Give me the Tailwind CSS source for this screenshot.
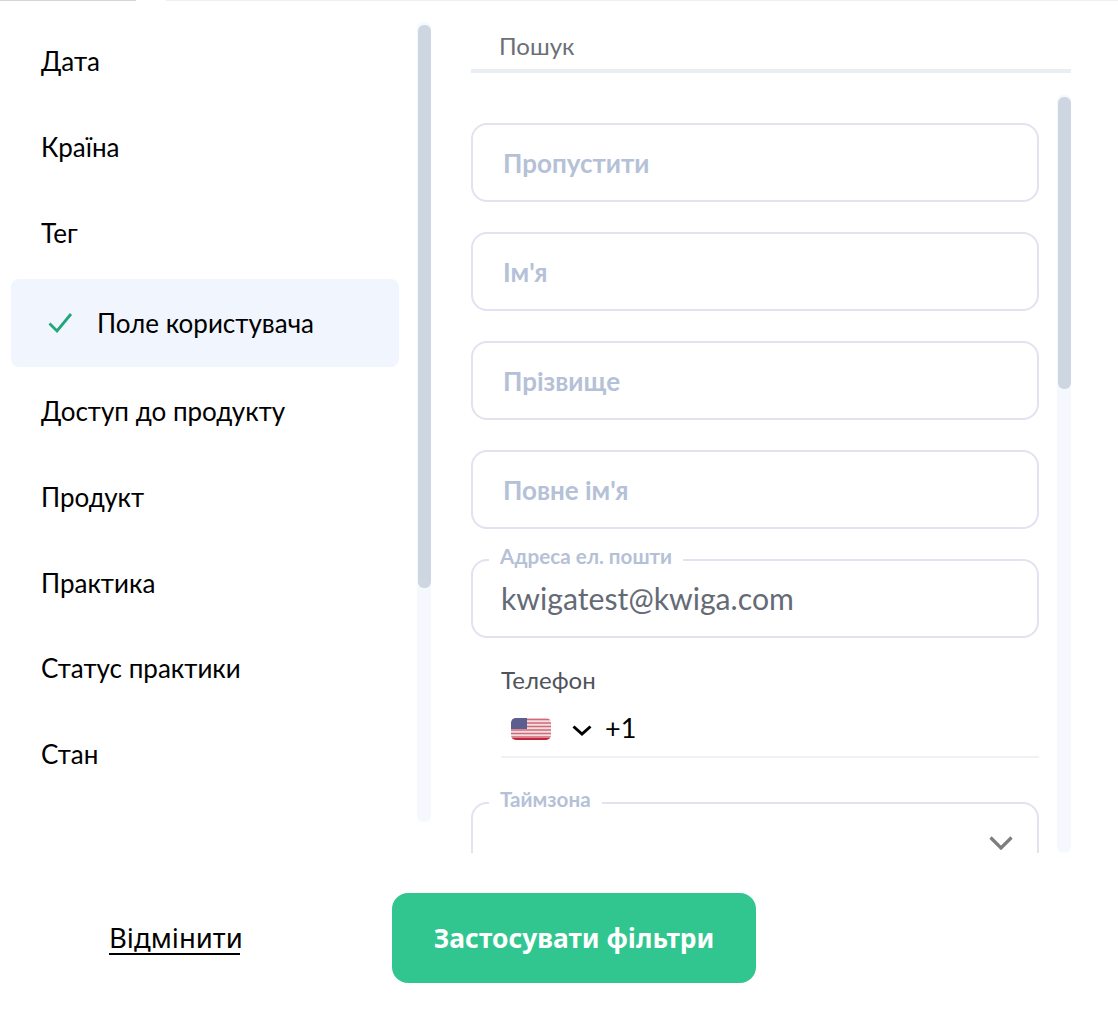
<!DOCTYPE html>
<html lang="uk">
    <head>
        <title>Фільтри</title>
        <meta charset="UTF-8" />
        <meta name="viewport" content="width=device-width, initial-scale=1.0" />
        <script src="https://cdn.jsdelivr.net/npm/@tailwindcss/browser@4"></script>
    </head>
    <body class="h-[1016px] w-[1118px] overflow-hidden bg-white font-['Lato','Noto_Sans',sans-serif] text-black">
        <!-- strip of the page behind the modal -->
        <div class="flex h-px">
            <div class="w-[136px] bg-[#d4d4da]"></div>
            <div class="w-[30px]"></div>
            <div class="flex-1 bg-[#eef0f6]"></div>
        </div>

        <div class="flex h-[852px]">
            <!-- filter list -->
            <div class="flex h-[821px] w-[471px] pt-[21px]">
                <ul class="ml-[11px] flex h-[800px] w-[388px] flex-col text-[26px] leading-[32px]">
                    <li class="flex h-[86px] items-center pb-[9px] pl-[30px]">Дата</li>
                    <li class="flex h-[86px] items-center pb-[9px] pl-[30px]">Країна</li>
                    <li class="flex h-[85px] items-center pb-[7px] pl-[30px]">Тег</li>
                    <li class="flex h-[88px] items-center rounded-lg bg-[#f1f5fe] pl-[36px]">
                        <svg class="mr-[22px] size-[28px]" viewBox="0 0 28 28" fill="none" stroke="#1fa77a" stroke-width="2.800">
                            <path d="M2.5 14.5l7.5 7.5L24 5" />
                        </svg>
                        <span>Поле користувача</span>
                    </li>
                    <li class="flex h-[87px] items-center pl-[30px]">Доступ до продукту</li>
                    <li class="flex h-[86px] items-center pl-[30px]">Продукт</li>
                    <li class="flex h-[85px] items-center pl-[30px]">Практика</li>
                    <li class="flex h-[86px] items-center pl-[30px]">Статус практики</li>
                    <li class="flex h-[85px] items-center pl-[30px]">Стан</li>
                </ul>
                <div class="ml-[18px] h-[800px] w-[14px] rounded-md bg-[#f5f9fd] px-px pt-[3px]">
                    <div class="h-[563px] w-[13px] rounded-md bg-[#cdd6e1]"></div>
                </div>
            </div>

            <!-- fields -->
            <div class="flex w-[600px] flex-col">
                <div class="h-[72px] border-b-4 border-[#e8eef4] pl-[28px] pt-[30px] text-[24px] leading-[30px] text-[#6b6f76]">Пошук</div>

                <div class="mt-[22px] flex h-[758px] justify-between overflow-hidden">
                    <div class="flex w-[568px] flex-col pt-[28px]">
                        <div class="flex h-[79px] shrink-0 items-center rounded-2xl border-2 border-[#e2e2f0] pl-[30px] pt-px text-[26px] font-bold text-[#b5c1d6]">Пропустити</div>
                        <div class="mt-[30px] flex h-[79px] shrink-0 items-center rounded-2xl border-2 border-[#e2e2f0] pl-[30px] pt-px text-[26px] font-bold text-[#b5c1d6]">Ім'я</div>
                        <div class="mt-[30px] flex h-[79px] shrink-0 items-center rounded-2xl border-2 border-[#e2e2f0] pl-[30px] pt-px text-[26px] font-bold text-[#b5c1d6]">Прізвище</div>
                        <div class="mt-[30px] flex h-[79px] shrink-0 items-center rounded-2xl border-2 border-[#e2e2f0] pl-[30px] pt-px text-[26px] font-bold text-[#b5c1d6]">Повне ім'я</div>

                        <div class="relative mt-[30px] flex h-[79px] shrink-0 items-center rounded-2xl border-2 border-[#e2e2f0] pl-[28px] text-[30.2px] text-[#646b76]">
                            <span class="absolute -top-[18px] left-[16px] bg-white px-[11px] text-[20.6px] font-bold leading-[26px] text-[#b5c1d6]">Адреса ел. пошти</span>
                            kwigatest@kwiga.com
                        </div>

                        <div class="shrink-0 pl-[30px]">
                            <div class="mt-[27px] text-[24px] leading-[30px] text-[#4f545c]">Телефон</div>
                            <div class="mt-[8px] flex h-[55px] items-center border-b-2 border-[#eef2f7] pb-[2px] text-[27px]">
                                <svg class="ml-[10px] h-[22px] w-[40px] rounded-[5px]" viewBox="0 0 40 22">
                                    <rect width="40" height="22" fill="#f3dfe2" />
                                    <path d="M0 1.5h40M0 5h40M0 8.500h40M0 12h40M0 15.500h40M0 19h40" stroke="#cf6a78" stroke-width="1.700" />
                                    <path d="M0 21h40" stroke="#c8233c" stroke-width="2" />
                                    <rect width="16" height="11" fill="#5b5f8f" />
                                </svg>
                                <svg class="ml-[21px] mt-[3px] h-[11px] w-[20px]" viewBox="0 0 20 11" fill="none" stroke="#000" stroke-width="3">
                                    <path d="M1.500 1.500L10 9l8.500-7.500" />
                                </svg>
                                <span class="ml-[13px]">+1</span>
                            </div>
                        </div>

                        <div class="relative mt-[44px] flex h-[79px] shrink-0 justify-end rounded-2xl border-2 border-[#e2e2f0] pr-[24px] pt-[32px]">
                            <span class="absolute -top-[18px] left-[16px] bg-white px-[11px] text-[20.6px] font-bold leading-[26px] text-[#b5c1d6]">Таймзона</span>
                            <svg class="h-[14px] w-[24px]" viewBox="0 0 24 14" fill="none" stroke="#7d7d7d" stroke-width="3.200">
                                <path d="M1.500 1.500L12 12 22.500 1.500" />
                            </svg>
                        </div>
                    </div>

                    <div class="h-[758px] w-[14px] rounded-md bg-[#f5f9fd] px-px pt-[2px]">
                        <div class="h-[292px] w-[13px] rounded-md bg-[#cdd6e1]"></div>
                    </div>
                </div>
            </div>
        </div>

        <!-- footer -->
        <div class="flex items-center pl-[109px] pt-[40px]">
            <a class="w-[131px] border-b-2 border-black pt-[2px] text-[27.500px] leading-[30px] font-['Noto_Sans','Lato',sans-serif]">Відмінити</a>
            <button class="ml-[152px] h-[90px] w-[364px] rounded-2xl bg-[#31c68f] pt-[2px] text-[26.400px] font-bold text-white font-['Noto_Sans','Lato',sans-serif]">Застосувати фільтри</button>
        </div>
    </body>
</html>
